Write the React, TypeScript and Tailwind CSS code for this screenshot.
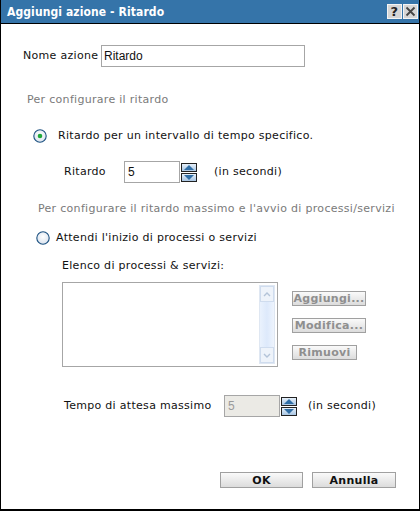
import React from 'react';

const font = { fontFamily: '"DejaVu Sans", Verdana, sans-serif' };
const inputFont = { fontFamily: '"Liberation Sans", Arial, sans-serif' };

// Radio button drawn like the Swing look
function Radio({ checked }: { checked?: boolean }) {
  return (
    <svg width="14" height="14" viewBox="0 0 14 14" className="shrink-0">
      <defs>
        <radialGradient id="rg" cx="50%" cy="40%" r="60%">
          <stop offset="0%" stopColor="#ffffff" />
          <stop offset="100%" stopColor="#d9e2ee" />
        </radialGradient>
      </defs>
      <circle cx="7" cy="7" r="6.2" fill="url(#rg)" stroke="#1c5180" strokeWidth="1.1" />
      {checked && <circle cx="7" cy="7" r="2.3" fill="#1fa83a" />}
    </svg>
  );
}

function Spinner() {
  return (
    <div className="flex flex-col gap-[1px] w-[16px]">
      <div className="h-[9px] border border-[#222] bg-gradient-to-b from-[#e6f0fa] to-[#a9c6e3] flex items-center justify-center">
        <svg width="10" height="5" viewBox="0 0 10 5"><polygon points="0,5 5,0 10,5" fill="#2f6ea6" /></svg>
      </div>
      <div className="h-[9px] border border-[#222] bg-gradient-to-b from-[#e6f0fa] to-[#a9c6e3] flex items-center justify-center">
        <svg width="10" height="5" viewBox="0 0 10 5"><polygon points="0,0 10,0 5,5" fill="#2f6ea6" /></svg>
      </div>
    </div>
  );
}

function Btn({ label, w, h, disabled }: { label: string; w: string; h: string; disabled?: boolean }) {
  return (
    <button
      className={`${w} ${h} border border-[#a0a0a0] bg-gradient-to-b from-[#fafafa] to-[#dcdcdc] text-[11px] font-bold leading-none tracking-[0.3px] flex items-center justify-center ${disabled ? 'text-[#8f8f8f]' : 'text-[#111]'}`}
    >
      {label}
    </button>
  );
}

export default function App() {
  return (
    <div className="w-[420px] h-[511px] bg-white flex flex-col border-x border-b-2 border-black text-[11px] leading-[16px] tracking-[0.3px] text-[#111]" style={font}>
      {/* Title bar */}
      <div className="h-[24px] bg-[#3574a9] border-b border-black flex items-center justify-between pl-[6px] pr-[1px] shrink-0">
        <span className="text-white font-bold text-[12px] tracking-[0.1px]" style={{ fontFamily: '"DejaVu Sans Condensed", "DejaVu Sans", sans-serif' }}>Aggiungi azione - Ritardo</span>
        <div className="flex gap-[1px]">
          <div className="w-[15px] h-[15px] bg-[#d6d6d6] border border-[#f4f4f4] flex items-center justify-center text-[#222] font-bold text-[13px] leading-none">?</div>
          <div className="w-[15px] h-[15px] bg-[#d6d6d6] border border-[#f4f4f4] flex items-center justify-center">
            <svg width="11" height="11" viewBox="0 0 11 11"><path d="M1.5 1.5 L9.5 9.5 M9.5 1.5 L1.5 9.5" stroke="#444" strokeWidth="1.8" /></svg>
          </div>
        </div>
      </div>

      {/* Body */}
      <div className="flex flex-col pl-[21px]">
        <div className="flex items-center mt-[21px] h-[22px]">
          <span className="w-[79px] pl-[1px]">Nome azione</span>
          <div className="w-[204px] h-[22px] border border-[#a6a6a6] flex items-center px-[2px] text-[12px] tracking-normal" style={inputFont}>Ritardo</div>
        </div>

        <div className="mt-[25px] h-[16px] ml-[5px] text-[#7a7a7a]">Per configurare il ritardo</div>

        <div className="flex items-center mt-[20px] h-[16px] ml-[11px] gap-[11px]">
          <Radio checked />
          <span>Ritardo per un intervallo di tempo specifico.</span>
        </div>

        <div className="flex items-center mt-[17px] h-[22px] ml-[42px]">
          <span className="w-[60px]">Ritardo</span>
          <div className="w-[56px] h-[22px] border border-[#a6a6a6] flex items-center px-[3px] text-[12px] tracking-normal" style={inputFont}>5</div>
          <div className="ml-[1px]"><Spinner /></div>
          <span className="ml-[17px]">(in secondi)</span>
        </div>

        <div className="mt-[18px] h-[16px] ml-[16px] text-[#7a7a7a]">Per configurare il ritardo massimo e l'avvio di processi/servizi</div>

        <div className="flex items-center mt-[13px] h-[16px] ml-[14px] gap-[6px]">
          <Radio />
          <span>Attendi l'inizio di processi o servizi</span>
        </div>

        <div className="mt-[12px] h-[16px] ml-[40px]">Elenco di processi &amp; servizi:</div>

        <div className="flex mt-[8px] ml-[40px]">
          <div className="w-[216px] h-[85px] border border-[#a6a6a6] flex justify-end p-[2px]">
            <div className="w-[16px] h-full flex flex-col bg-gradient-to-r from-[#eaf2fd] via-[#dde9fb] to-[#eef4fd] border border-[#dfe7f2]">
              <div className="h-[16px] bg-[#eef3fa] border border-[#cfdcee] flex items-center justify-center">
                <svg width="8" height="5" viewBox="0 0 8 5"><path d="M1 4 L4 1 L7 4" stroke="#b3c3d8" strokeWidth="1.4" fill="none" /></svg>
              </div>
              <div className="flex-1" />
              <div className="h-[16px] bg-[#eef3fa] border border-[#cfdcee] flex items-center justify-center">
                <svg width="8" height="5" viewBox="0 0 8 5"><path d="M1 1 L4 4 L7 1" stroke="#b3c3d8" strokeWidth="1.4" fill="none" /></svg>
              </div>
            </div>
          </div>
          <div className="flex flex-col ml-[14px] mt-[9px] gap-[12px]">
            <Btn label="Aggiungi..." w="w-[74px]" h="h-[15px]" disabled />
            <Btn label="Modifica..." w="w-[74px]" h="h-[15px]" disabled />
            <Btn label="Rimuovi" w="w-[65px]" h="h-[15px]" disabled />
          </div>
        </div>

        <div className="flex items-center mt-[28px] h-[22px] ml-[42px]">
          <span className="w-[160px]">Tempo di attesa massimo</span>
          <div className="w-[56px] h-[22px] border border-[#a6a6a6] bg-[#ebeae5] text-[#9a9a9a] flex items-center px-[3px] text-[12px] tracking-normal" style={inputFont}>5</div>
          <div className="ml-[1px]"><Spinner /></div>
          <span className="ml-[11px]">(in secondi)</span>
        </div>

        <div className="flex mt-[55px] ml-[198px] gap-[9px]">
          <Btn label="OK" w="w-[83px]" h="h-[16px]" />
          <Btn label="Annulla" w="w-[84px]" h="h-[16px]" />
        </div>
      </div>
    </div>
  );
}
